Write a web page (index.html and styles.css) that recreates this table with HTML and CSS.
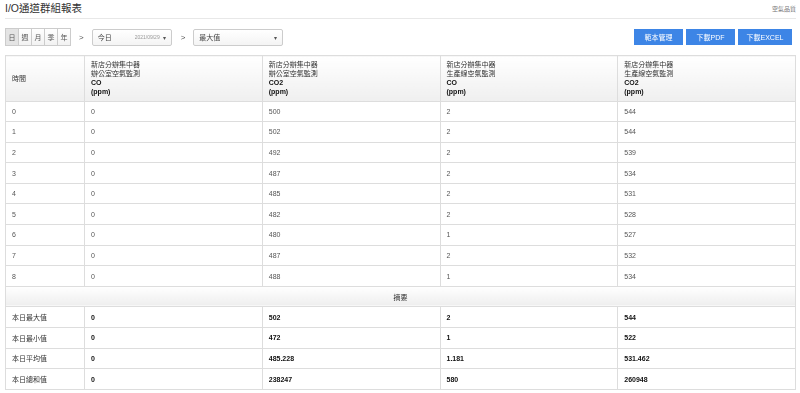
FILE: index.html
```html
<!DOCTYPE html>
<html lang="zh-Hant">
<head>
    <meta charset="UTF-8">
    <title>I/O通道群組報表</title>
    <link rel="stylesheet" href="styles.css">
</head>
<body>
    <div class="page-head">
        <h1>I/O通道群組報表</h1>
        <span class="crumb">空氣品質</span>
    </div>

    <div class="toolbar">
        <div class="range-group">
            <button class="range active">日</button>
            <button class="range">週</button>
            <button class="range">月</button>
            <button class="range">季</button>
            <button class="range">年</button>
        </div>
        <span class="step">&gt;</span>
        <div class="select date-select">
            <span>今日</span>
            <span class="date">2021/09/29</span>
            <span class="caret">▾</span>
        </div>
        <span class="step">&gt;</span>
        <div class="select stat-select">
            <span>最大值</span>
            <span class="caret">▾</span>
        </div>
        <div class="actions">
            <button class="btn">範本管理</button>
            <button class="btn">下載PDF</button>
            <button class="btn btn-wide">下載EXCEL</button>
        </div>
    </div>

    <table class="report">
        <colgroup>
            <col class="c-time">
            <col><col><col><col>
        </colgroup>
        <thead>
            <tr>
                <th>時間</th>
                <th>新店分辦集中器<br>辦公室空氣監測<br><b>CO</b><br><b>(ppm)</b></th>
                <th>新店分辦集中器<br>辦公室空氣監測<br><b>CO2</b><br><b>(ppm)</b></th>
                <th>新店分辦集中器<br>生產線空氣監測<br><b>CO</b><br><b>(ppm)</b></th>
                <th>新店分辦集中器<br>生產線空氣監測<br><b>CO2</b><br><b>(ppm)</b></th>
            </tr>
        </thead>
        <tbody>
            <tr><td>0</td><td>0</td><td>500</td><td>2</td><td>544</td></tr>
            <tr><td>1</td><td>0</td><td>502</td><td>2</td><td>544</td></tr>
            <tr><td>2</td><td>0</td><td>492</td><td>2</td><td>539</td></tr>
            <tr><td>3</td><td>0</td><td>487</td><td>2</td><td>534</td></tr>
            <tr><td>4</td><td>0</td><td>485</td><td>2</td><td>531</td></tr>
            <tr><td>5</td><td>0</td><td>482</td><td>2</td><td>528</td></tr>
            <tr><td>6</td><td>0</td><td>480</td><td>1</td><td>527</td></tr>
            <tr><td>7</td><td>0</td><td>487</td><td>2</td><td>532</td></tr>
            <tr><td>8</td><td>0</td><td>488</td><td>1</td><td>534</td></tr>
            <tr class="summary-head"><td colspan="5">摘要</td></tr>
            <tr class="summary"><td>本日最大值</td><td>0</td><td>502</td><td>2</td><td>544</td></tr>
            <tr class="summary"><td>本日最小值</td><td>0</td><td>472</td><td>1</td><td>522</td></tr>
            <tr class="summary"><td>本日平均值</td><td>0</td><td>485.228</td><td>1.181</td><td>531.462</td></tr>
            <tr class="summary"><td>本日總和值</td><td>0</td><td>238247</td><td>580</td><td>260948</td></tr>
        </tbody>
    </table>
</body>
</html>
```

FILE: styles.css
```css
body {
    margin: 0;
    padding: 0 4px 0 5px;
    font-family: "Liberation Sans", Arial, "Noto Sans CJK TC", sans-serif;
    font-size: 7px;
    color: #333;
    background: #fff;
}
.page-head {
    display: flex;
    justify-content: space-between;
    align-items: flex-end;
    height: 18px;
    border-bottom: 1px solid #e8e8e8;
}
.page-head h1 {
    margin: 0 0 3px;
    font-size: 10.5px;
    font-weight: normal;
    color: #333;
}
.crumb {
    font-size: 6px;
    color: #777;
    margin-bottom: 5px;
}
/* own layer: keeps the small text grey instead of colour-fringed */
.toolbar {
    display: flex;
    align-items: center;
    margin-top: 9px;
    height: 18px;
    will-change: transform;
}
.range-group { display: flex; }
.range {
    width: 14px;
    height: 18px;
    padding: 0;
    margin: 0 -1px 0 0;
    border: 1px solid #ccc;
    background: linear-gradient(#fff, #f2f2f2);
    font: inherit;
    font-size: 7px;
    color: #555;
}
.range.active { background: #e4e4e4; }
.step {
    margin: 0 8px 0 9px;
    font-size: 8px;
    color: #555;
}
.select {
    display: flex;
    align-items: center;
    height: 17px;
    padding: 0 5px;
    border: 1px solid #ccc;
    border-radius: 2px;
    background: linear-gradient(#fff, #f4f4f4);
    color: #444;
    box-sizing: border-box;
}
.date-select { width: 80px; }
.stat-select { width: 90px; }
.select .date {
    margin-left: auto;
    font-size: 5px;
    color: #999;
}
.select .caret {
    margin-left: auto;
    font-size: 6px;
    color: #555;
}
.date-select .caret { margin-left: 3px; }
.actions {
    display: flex;
    gap: 3px;
    margin-left: auto;
    margin-right: 4px;
}
.btn {
    width: 49px;
    height: 16px;
    padding: 0;
    border: none;
    background: #3d85e6;
    color: #fff;
    font: inherit;
    font-size: 7px;
    cursor: pointer;
}
.btn-wide { width: 54px; }
.report {
    width: 100%;
    margin-top: 9px;
    border-collapse: collapse;
    border: 1px solid #ddd;
    table-layout: fixed;
    will-change: transform;
}
.c-time { width: 79px; }
.report th {
    height: 44.5px;
    padding: 0 6px;
    text-align: left;
    font-weight: normal;
    line-height: 9px;
    color: #333;
    border: 1px solid #ddd;
    background: linear-gradient(#fff, #efefef);
}
.report th b { font-weight: bold; color: #111; }
.report td {
    height: 19.6px;
    padding: 0 6px;
    border: 1px solid #ddd;
    color: #555;
}
.summary-head td {
    text-align: center;
    color: #333;
    background: linear-gradient(#fff, #eee);
}
.summary td {
    font-weight: bold;
    color: #111;
}
.summary td:first-child {
    font-weight: normal;
    color: #333;
}
```
